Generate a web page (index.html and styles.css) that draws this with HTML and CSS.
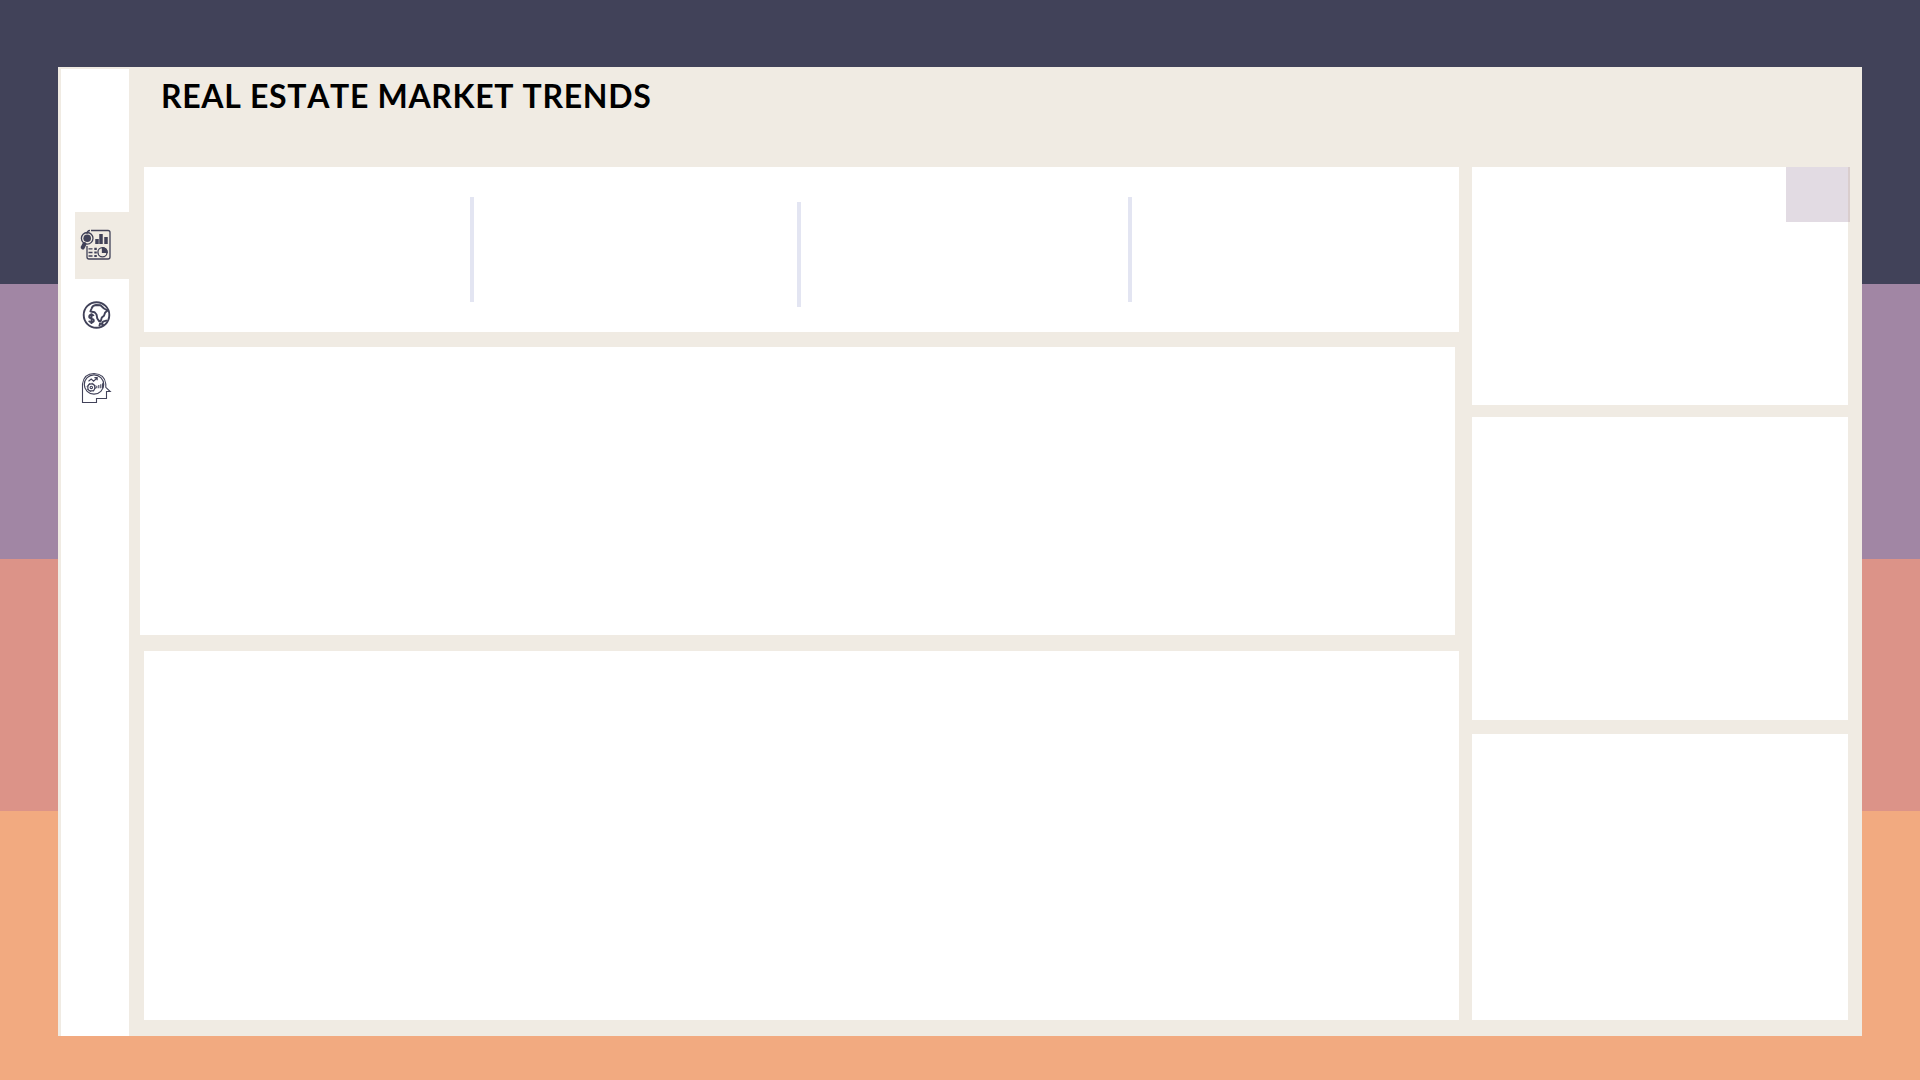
FILE: index.html
```html
<!DOCTYPE html>
<html lang="en">
<head>
<meta charset="utf-8">
<title>Real Estate Market Trends</title>
<link rel="stylesheet" href="styles.css">
</head>
<body>
<div class="dashboard">
  <nav class="sidebar">
    <a class="nav-item active" aria-label="Overview">
      <svg class="icon" viewBox="0 0 32 32" fill="none" stroke="currentColor" stroke-width="1.3">
        <path d="M11 1.5H28Q30 1.5 30 3.5V28Q30 30 28 30H9Q7 30 7 28V17M7 5Q7 1.5 10 1.5"/>
        <circle cx="7.2" cy="9.3" r="5.8"/>
        <circle cx="7.2" cy="9.3" r="3.8" fill="currentColor" stroke="none"/>
        <path d="M4.5 15L2.7 18.5" stroke-width="4" stroke-linecap="round"/>
        <path d="M17 10V15M21 5V15M26 8V15" stroke-width="3.5"/>
        <path d="M8.5 19.8H12.5M8.5 23.5H12.5M8.5 27H12.5" />
        <path d="M14.3 19.8H16.8M14.3 23.5H16.8M14.3 27H16.8" stroke-width="2.2"/>
        <circle cx="22.5" cy="23.3" r="4.6"/>
        <path d="M22.5 18.7V23.3H27.1A4.6 4.6 0 0 0 22.5 18.7Z" fill="currentColor"/>
      </svg>
    </a>
    <a class="nav-item" aria-label="Markets">
      <svg class="icon" viewBox="0 0 32 32" fill="none" stroke="currentColor" stroke-width="1.9" stroke-linejoin="round">
        <circle cx="16.5" cy="16" r="12.8"/>
        <path d="M12 12.8L10.4 12.4L11.6 9.5Q12.5 6.4 16 6L20.5 6.3L24 9.5L27.6 11.5L25.2 13.4L24 16.8L21.8 18.5L20.8 22L19.3 22.4L17.3 19.5L16.5 15.5L14.5 13.2Z"/>
        <path d="M13.7 17Q13.2 15.8 11.5 15.8Q9.2 15.8 9.2 17.8Q9.2 19.2 11.5 19.6Q13.8 20 13.8 21.5Q13.8 23.3 11.5 23.3Q9.4 23.3 8.9 21.8M11.5 14.2V25"/>
        <path d="M19.3 27.5L20 24.5L22 24.8L23 22.6L27 21.3M22 27L23.3 24.7"/>
      </svg>
    </a>
    <a class="nav-item" aria-label="Insights">
      <svg class="icon" viewBox="0 0 32 32" fill="none" stroke="currentColor" stroke-width="1.1">
        <path d="M2.5 12Q4 1.5 14 1.5Q24.8 2 25.8 12V15.3L30.2 19.5H26.5V26.5H16.5V30.5H2.5V12"/>
        <circle cx="14" cy="12.5" r="9.7" stroke-width="1.2"/>
        <circle cx="11.3" cy="15.4" r="3.5" stroke-width="1.2"/>
        <circle cx="11.3" cy="15.4" r="4.2" stroke-width="1" stroke-dasharray="1.5 1.8"/>
        <circle cx="11.3" cy="15.4" r="1.2"/>
        <path d="M16.8 16.2V13.8M18.8 16.2V13M20.8 16.2V12.2M22.6 16.2V11.2"/>
        <path d="M8.5 9.2L11.2 7L13.6 9.2L17 6M14.4 5.6H17.2V8.2"/>
      </svg>
    </a>
  </nav>
  <main class="content">
    <h1 class="title">REAL ESTATE MARKET TRENDS</h1>
    <div class="columns">
      <div class="main-column">
        <section class="card kpis">
          <i class="divider"></i><i class="divider lower"></i><i class="divider"></i>
        </section>
        <section class="card chart"></section>
        <section class="card detail"></section>
      </div>
      <div class="side-column">
        <section class="card"><span class="badge"></span></section>
        <section class="card"></section>
        <section class="card"></section>
      </div>
    </div>
  </main>
</div>
</body>
</html>
```
FILE: styles.css
```css
* { box-sizing: border-box; }

body {
  margin: 0;
  height: 1080px;
  padding: 67px 58px 44px;
  overflow: hidden;
  background: linear-gradient(#414259 0 284px, #a186a4 284px 559px, #dc9388 559px 811px, #f2aa80 811px);
}

.dashboard {
  display: flex;
  height: 969px;
  padding: 2px 0 0 3px;
  background: #f0ebe3;
}

.sidebar {
  width: 68px;
  padding: 143px 0 0 14px;
  background: #fff;
  color: #414259;
}

.nav-item {
  display: flex;
  height: 67px;
  padding: 0 0 2px 5px;
  align-items: center;
}

.nav-item.active { background: #f0ebe3; }
.nav-item + .nav-item { margin-top: 3px; }
.nav-item:last-child { margin-top: 6px; }

.icon {
  width: 32px;
  height: 32px;
}

.content {
  flex: 1;
  padding: 0 14px 16px 11px;
}

.title {
  height: 98px;
  margin: 0;
  padding: 7px 0 0 21px;
  color: #000;
  font: 700 32px/40px Lato, sans-serif;
  font-kerning: none;
  letter-spacing: 0.68px;
  white-space: nowrap;
}

.columns {
  display: grid;
  grid-template-columns: 1319px 376px;
  gap: 13px;
}

.main-column {
  display: grid;
  grid-template-rows: 165px 288px 369px;
  row-gap: 15px;
  padding-left: 4px;
}

.card { background: #fff; }

.chart { margin: 0 4px 0 -4px; }

.detail { margin-top: 1px; height: 369px; }

.side-column {
  display: grid;
  grid-template-columns: 376px;
  grid-template-rows: 238px 303px 286px;
  row-gap: 12px;
}

.side-column .card:last-child { margin-top: 2px; height: 286px; }

.kpis {
  display: flex;
  gap: 323px;
  padding: 30px 0 0 326px;
}

.divider {
  width: 4px;
  height: 105px;
  background: #e3e5f2;
}

.divider.lower { margin-top: 5px; }
.divider:last-child { margin-left: 4px; }

.badge {
  display: block;
  width: 64px;
  height: 55px;
  margin-left: 314px;
  border-right: 2px solid #d9cdcd;
  background: #e2dbe3;
}
```
